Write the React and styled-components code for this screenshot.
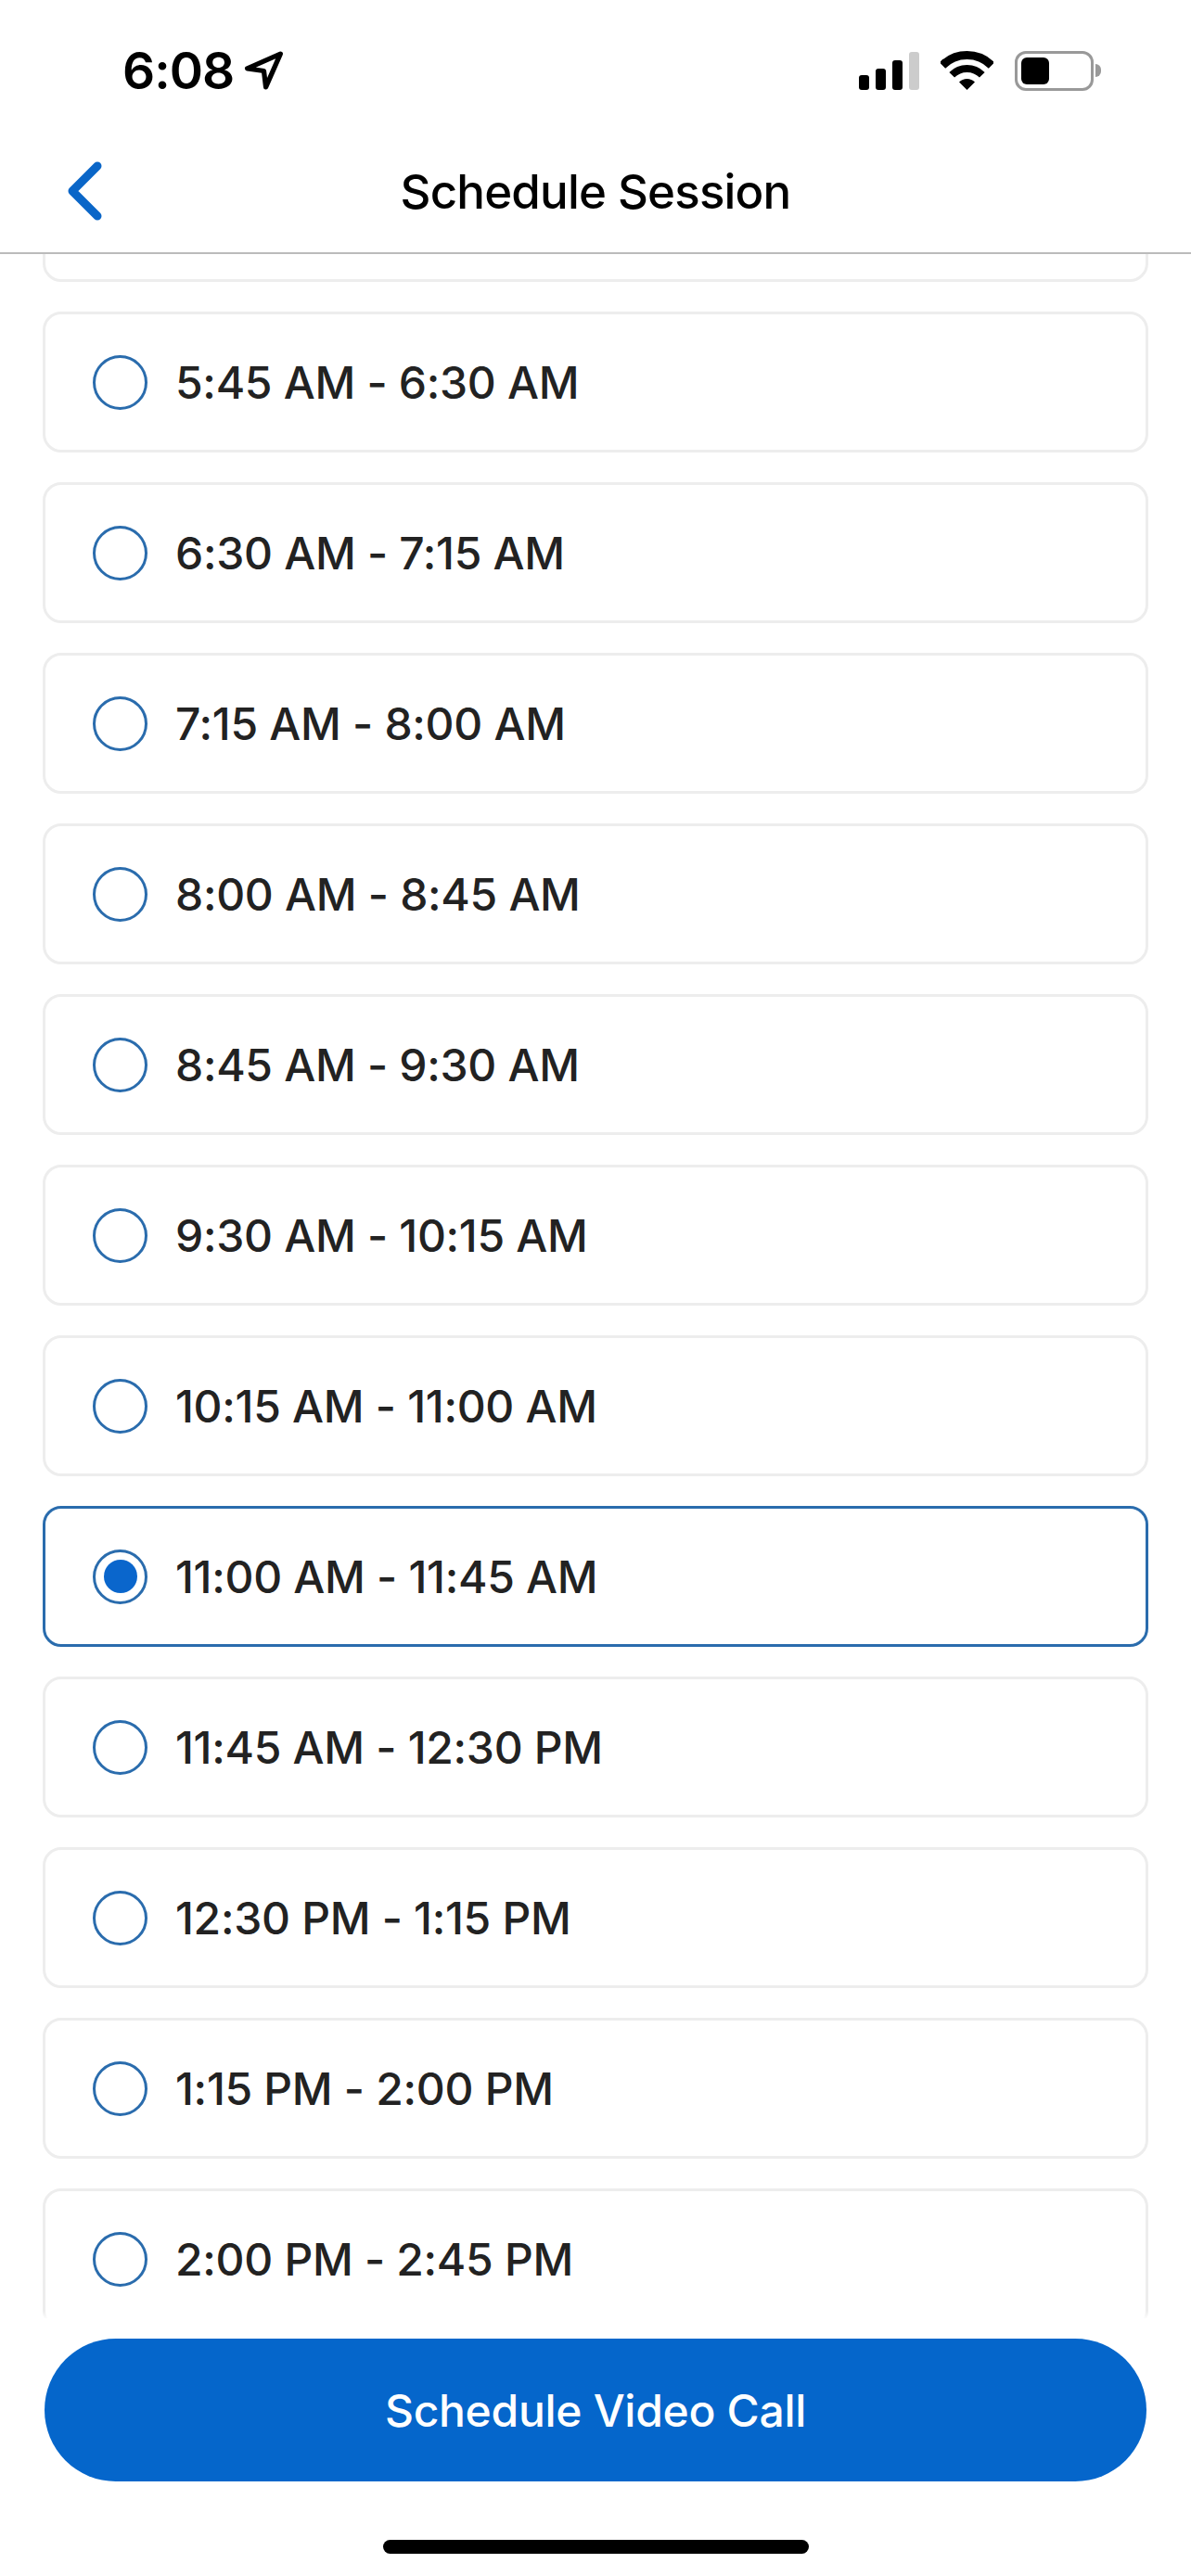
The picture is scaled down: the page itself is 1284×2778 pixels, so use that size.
import React, { useState } from "react";
import styled, { createGlobalStyle } from "styled-components";

const GlobalStyle = createGlobalStyle`
  html, body {
    margin: 0;
    padding: 0;
    background: #fff;
  }
  * {
    box-sizing: border-box;
  }
`;

const Screen = styled.div`
  width: 1284px;
  height: 2778px;
  display: flex;
  flex-direction: column;
  overflow: hidden;
  background: #fff;
  font-family: Inter, "Liberation Sans", sans-serif;
`;

const StatusBar = styled.div`
  height: 132px;
  flex: none;
  display: flex;
  align-items: center;
  justify-content: space-between;
  padding: 20px 97px 0 132px;
`;

const Clock = styled.div`
  display: flex;
  align-items: center;
  gap: 11px;
  font-size: 55px;
  font-weight: 600;
  letter-spacing: -1px;
  color: #000;
`;

const StatusIcons = styled.div`
  display: flex;
  align-items: center;
  gap: 23px;
`;

const Signal = styled.div`
  display: flex;
  align-items: flex-end;
  gap: 7px;
  height: 41px;
`;

const SignalBar = styled.span`
  width: 11px;
  height: ${(p) => p.$h}px;
  border-radius: 3px;
  background: ${(p) => (p.$off ? "#cccccc" : "#000")};
`;

const Battery = styled.div`
  display: flex;
  align-items: center;
  gap: 2px;
`;

const BatteryBody = styled.div`
  width: 85px;
  height: 43px;
  padding: 4px;
  border: 3px solid #999;
  border-radius: 12px;
`;

const BatteryFill = styled.div`
  width: 30px;
  height: 100%;
  border-radius: 6px;
  background: #000;
`;

const BatteryNub = styled.div`
  width: 6px;
  height: 14px;
  border-radius: 0 6px 6px 0;
  background: #999;
`;

const Header = styled.header`
  height: 142px;
  flex: none;
  display: grid;
  grid-template-columns: 1fr auto 1fr;
  align-items: center;
  padding: 8px 72px 0;
  border-bottom: 2px solid #bbbbbb;
`;

const BackButton = styled.button`
  width: 40px;
  height: 64px;
  padding: 0;
  border: 0;
  background: none;
  display: flex;
`;

const Title = styled.h1`
  margin: 0;
  font-size: 51px;
  font-weight: 500;
  letter-spacing: -0.8px;
  color: #000;
  white-space: nowrap;
`;

const Scroller = styled.div`
  flex: 1;
  min-height: 0;
  overflow: hidden;
`;

const SlotList = styled.ul`
  list-style: none;
  margin: -122px 0 0;
  padding: 0 46px;
  display: flex;
  flex-direction: column;
  gap: 32px;
`;

const Slot = styled.li`
  height: 152px;
  display: flex;
  align-items: center;
  gap: 30px;
  padding-left: 51px;
  border: 3px solid ${(p) => (p.$selected ? "#2a6cad" : "#ededed")};
  border-radius: 20px;
  background: #fff;
`;

const Radio = styled.span`
  width: 59px;
  height: 59px;
  flex: none;
  display: flex;
  align-items: center;
  justify-content: center;
  border: 3.5px solid #2a6cad;
  border-radius: 50%;
`;

const RadioDot = styled.span`
  width: 36px;
  height: 36px;
  border-radius: 50%;
  background: #0a66cc;
`;

const SlotLabel = styled.span`
  font-size: 48px;
  font-weight: 550;
  letter-spacing: -0.3px;
  color: #222;
  white-space: nowrap;
`;

const Footer = styled.div`
  flex: none;
  position: relative;
  display: flex;
  flex-direction: column;
  align-items: center;
  padding: 22px 48px 24px;
  background: #fff;
  box-shadow: 0 -3px 6px #fff;
`;

const ScheduleButton = styled.button`
  width: 100%;
  height: 154px;
  border: 0;
  border-radius: 77px;
  background: #0566cb;
  color: #fff;
  font-family: inherit;
  font-size: 48px;
  font-weight: 500;
  letter-spacing: -0.3px;
`;

const HomeBar = styled.div`
  width: 459px;
  height: 15px;
  margin-top: 63px;
  border-radius: 8px;
  background: #000;
`;

const slots = [
  "5:45 AM - 6:30 AM",
  "6:30 AM - 7:15 AM",
  "7:15 AM - 8:00 AM",
  "8:00 AM - 8:45 AM",
  "8:45 AM - 9:30 AM",
  "9:30 AM - 10:15 AM",
  "10:15 AM - 11:00 AM",
  "11:00 AM - 11:45 AM",
  "11:45 AM - 12:30 PM",
  "12:30 PM - 1:15 PM",
  "1:15 PM - 2:00 PM",
  "2:00 PM - 2:45 PM",
];

const LocationArrow = () => (
  <svg width="44" height="42" viewBox="0 0 41 40" fill="none">
    <path
      d="M37 3 3 18l17 2.5L22 37Z"
      stroke="#000"
      strokeWidth="5"
      strokeLinejoin="round"
    />
  </svg>
);

const WifiIcon = () => (
  <svg width="57" height="42" viewBox="0 0 57 42" fill="none">
    <path d="M2 15.5a37.5 37.5 0 0 1 53 0" stroke="#000" strokeWidth="9" />
    <path d="M12.2 25.7a23 23 0 0 1 32.6 0" stroke="#000" strokeWidth="8" />
    <path d="M28.5 42 20 33.5a12 12 0 0 1 17 0Z" fill="#000" />
  </svg>
);

const BackChevron = () => (
  <svg width="40" height="64" viewBox="0 0 40 64" fill="none">
    <path
      d="M33 5 6 32l27 27"
      stroke="#0a66c8"
      strokeWidth="9"
      strokeLinecap="round"
      strokeLinejoin="round"
    />
  </svg>
);

const App = () => {
  const [selected, setSelected] = useState("11:00 AM - 11:45 AM");

  return (
    <Screen>
      <GlobalStyle />
      <StatusBar>
        <Clock>
          6:08
          <LocationArrow />
        </Clock>
        <StatusIcons>
          <Signal>
            <SignalBar $h={16} />
            <SignalBar $h={23} />
            <SignalBar $h={32} />
            <SignalBar $h={41} $off />
          </Signal>
          <WifiIcon />
          <Battery>
            <BatteryBody>
              <BatteryFill />
            </BatteryBody>
            <BatteryNub />
          </Battery>
        </StatusIcons>
      </StatusBar>
      <Header>
        <BackButton aria-label="Back">
          <BackChevron />
        </BackButton>
        <Title>Schedule Session</Title>
      </Header>
      <Scroller>
        <SlotList>
          <Slot />
          {slots.map((slot) => (
            <Slot
              key={slot}
              $selected={slot === selected}
              onClick={() => setSelected(slot)}
            >
              <Radio>{slot === selected && <RadioDot />}</Radio>
              <SlotLabel>{slot}</SlotLabel>
            </Slot>
          ))}
        </SlotList>
      </Scroller>
      <Footer>
        <ScheduleButton>Schedule Video Call</ScheduleButton>
        <HomeBar />
      </Footer>
    </Screen>
  );
};

export default App;
